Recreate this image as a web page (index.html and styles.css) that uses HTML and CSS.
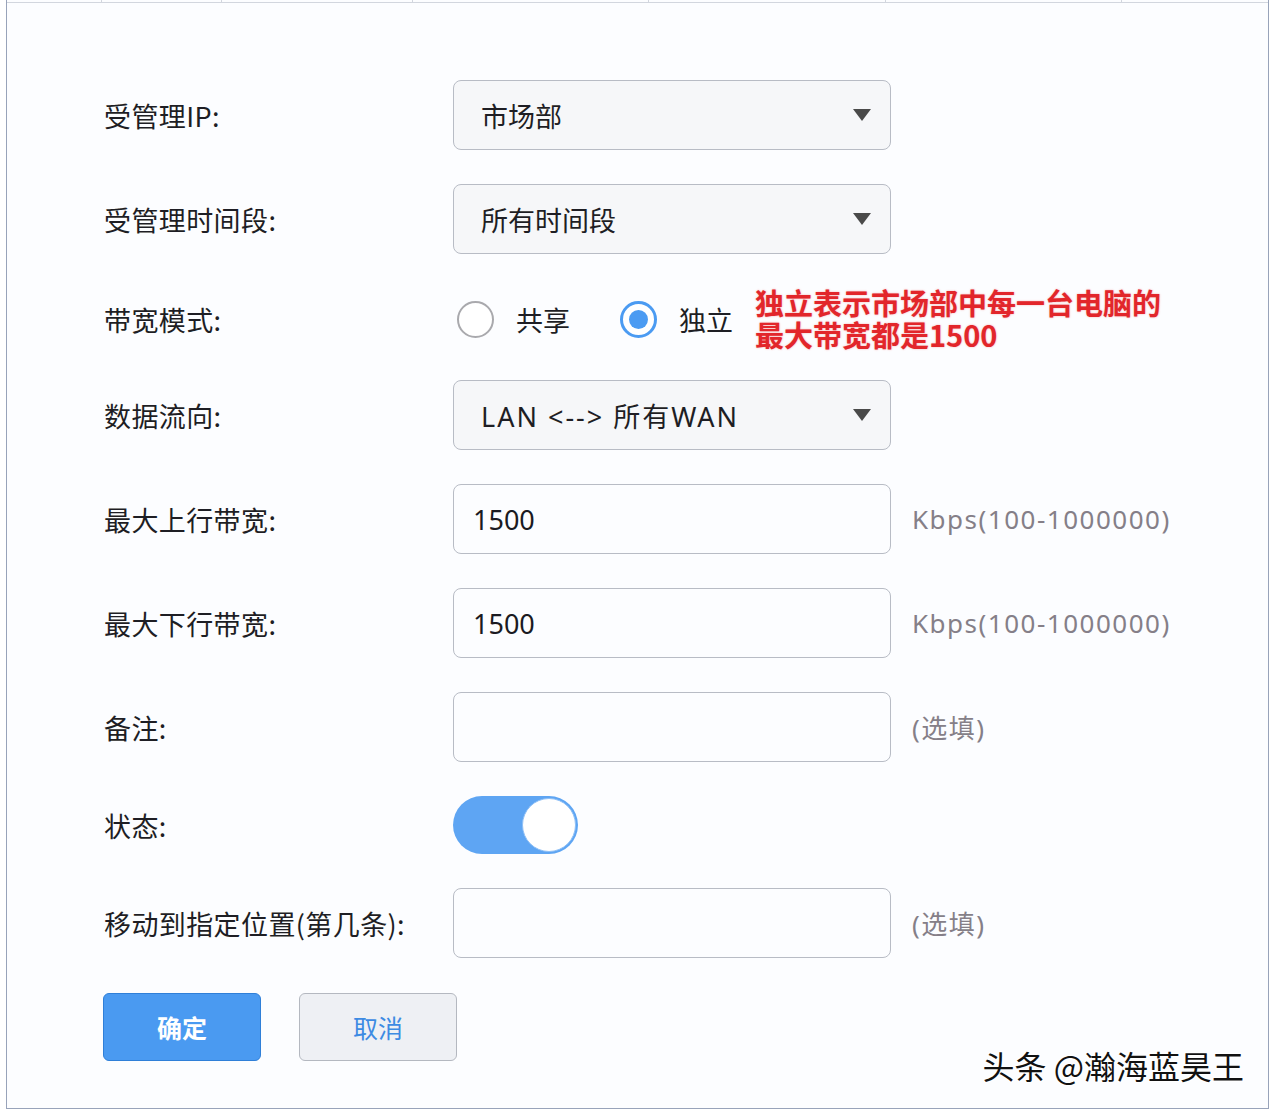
FILE: index.html
```html
<!DOCTYPE html>
<html lang="zh-CN">
<head>
<meta charset="utf-8">
<title>带宽控制</title>
<link rel="stylesheet" href="styles.css">
</head>
<body>
<div class="frame">
  <div class="thead">
    <span class="th c1"></span><span class="th c2"></span><span class="th c3"></span><span class="th c4"></span><span class="th c5"></span><span class="th c6"></span><span class="th c7"></span>
  </div>
  <form class="form">
    <div class="row">
      <label class="lbl">受管理IP:</label>
      <div class="select"><span class="val">市场部</span><svg class="caret" width="18" height="12" viewBox="0 0 18 12"><path d="M0 0H18L9 12Z" fill="#4a4a4a"/></svg></div>
    </div>
    <div class="row">
      <label class="lbl">受管理时间段:</label>
      <div class="select"><span class="val">所有时间段</span><svg class="caret" width="18" height="12" viewBox="0 0 18 12"><path d="M0 0H18L9 12Z" fill="#4a4a4a"/></svg></div>
    </div>
    <div class="row short">
      <label class="lbl">带宽模式:</label>
      <div class="radios">
        <span class="radio"></span><span class="rtext">共享</span>
        <span class="radio on"><span class="dot"></span></span><span class="rtext">独立</span>
        <div class="note"><div class="nline">独立表示市场部中每一台电脑的</div><div class="nline">最大带宽都是1500</div></div>
      </div>
    </div>
    <div class="row">
      <label class="lbl">数据流向:</label>
      <div class="select"><span class="val wide">LAN &lt;--&gt; 所有WAN</span><svg class="caret" width="18" height="12" viewBox="0 0 18 12"><path d="M0 0H18L9 12Z" fill="#4a4a4a"/></svg></div>
    </div>
    <div class="row">
      <label class="lbl">最大上行带宽:</label>
      <div class="input"><span class="ival">1500</span></div>
      <span class="hint">Kbps(100-1000000)</span>
    </div>
    <div class="row">
      <label class="lbl">最大下行带宽:</label>
      <div class="input"><span class="ival">1500</span></div>
      <span class="hint">Kbps(100-1000000)</span>
    </div>
    <div class="row">
      <label class="lbl">备注:</label>
      <div class="input"></div>
      <span class="hint">(选填)</span>
    </div>
    <div class="row short">
      <label class="lbl">状态:</label>
      <div class="switch"><span class="knob"></span></div>
    </div>
    <div class="row">
      <label class="lbl">移动到指定位置(第几条):</label>
      <div class="input"></div>
      <span class="hint">(选填)</span>
    </div>
    <div class="buttons">
      <button type="button" class="btn primary">确定</button>
      <button type="button" class="btn ghost">取消</button>
    </div>
  </form>
  <div class="watermark">头条 @瀚海蓝昊王</div>
</div>
</body>
</html>
```
FILE: styles.css
```css
* { box-sizing: border-box; }
html, body { margin: 0; padding: 0; background: #ffffff; }
body {
  font-family: "Noto Sans", "Noto Sans CJK SC", sans-serif;
  color: #222;
}
.frame {
  position: relative;
  margin-left: 6px;
  width: 1263px;
  height: 1109px;
  border: 1px solid #98a3ba;
  border-top: none;
  background: #fcfdff;
}
.thead {
  display: flex;
  height: 3px;
  border-bottom: 1px solid #d2d6de;
}
.th { height: 100%; border-right: 1px solid #d2d6de; }
.c1 { width: 95px; }
.c2 { width: 120px; }
.c3 { width: 191px; }
.c4 { width: 236px; }
.c5 { width: 237px; }
.c6 { width: 236px; }
.c7 { flex: 1; border-right: none; }

.form {
  display: flex;
  flex-direction: column;
  gap: 34px;
  padding: 77px 0 0 97px;
}
.row {
  display: grid;
  grid-template-columns: 349px 438px auto;
  align-items: center;
  height: 70px;
}
.row.short { height: 58px; }
.lbl {
  font-family: "Noto Sans CJK SC", sans-serif;
  font-size: 27px;
  color: #1e1e24;
  letter-spacing: 0.4px;
}
.select {
  height: 70px;
  border: 1px solid #b8bcc5;
  border-radius: 8px;
  background: #f6f7f9;
  display: flex;
  align-items: center;
  justify-content: space-between;
  padding: 0 19px 0 27px;
}
.val {
  font-family: "Noto Sans", "Noto Sans CJK SC", sans-serif;
  font-size: 27px;
  color: #1e1e24;
}
.val.wide { letter-spacing: 2px; }
.caret { display: block; }
.input {
  height: 70px;
  border: 1px solid #b8bcc5;
  border-radius: 8px;
  background: #fcfdff;
  display: flex;
  align-items: center;
  padding: 0 19px;
}
.ival {
  font-family: "Noto Sans", sans-serif;
  font-size: 27px;
  color: #1a1a22;
}
.hint {
  margin-left: 21px;
  font-family: "Noto Sans", "Noto Sans CJK SC", sans-serif;
  font-size: 26px;
  letter-spacing: 1.5px;
  color: #857f88;
}
.radios {
  grid-column: 2 / 4;
  display: flex;
  align-items: center;
  padding-left: 4px;
}
.radio {
  width: 37px;
  height: 37px;
  border-radius: 50%;
  border: 2px solid #a9a9ad;
  background: #fff;
  display: flex;
  align-items: center;
  justify-content: center;
  flex: none;
}
.radio.on {
  border: 3px solid #4b9bf2;
  margin-left: 50px;
}
.dot {
  width: 19px;
  height: 19px;
  border-radius: 50%;
  background: #4b9bf2;
}
.rtext {
  margin-left: 22px;
  font-family: "Noto Sans CJK SC", sans-serif;
  font-size: 27px;
  color: #1e1e24;
}
.note {
  margin-left: 22px;
  margin-top: -2px;
  display: flex;
  flex-direction: column;
  font-family: "Noto Sans CJK SC", sans-serif;
  font-weight: 700;
  font-size: 29px;
  color: #e2262b;
  text-shadow: 0 0 2px rgba(240, 60, 60, 0.45);
  white-space: nowrap;
}
.nline { line-height: 32px; height: 32px; }
.switch {
  width: 125px;
  height: 58px;
  border-radius: 29px;
  background: #5ea5f3;
  display: flex;
  align-items: center;
  justify-content: flex-end;
  padding-right: 2px;
}
.knob {
  width: 54px;
  height: 54px;
  border-radius: 50%;
  background: #fff;
  border: 1px solid #8fc0f6;
}
.buttons {
  display: flex;
  gap: 38px;
  margin-top: 1px;
  margin-left: -1px;
}
.btn {
  width: 158px;
  height: 68px;
  border-radius: 6px;
  font-family: "Noto Sans CJK SC", sans-serif;
  font-size: 25px;
  cursor: pointer;
}
.btn.primary {
  background: #4a9af1;
  border: 1px solid #2f7fd8;
  color: #ffffff;
  font-weight: 700;
}
.btn.ghost {
  background: #eef0f4;
  border: 1px solid #b4b8c0;
  color: #3d8be3;
}
.watermark {
  position: absolute;
  right: 24px;
  bottom: 23px;
  font-family: "Noto Sans CJK SC", sans-serif;
  font-size: 32px;
  line-height: 40px;
  color: #111;
  text-shadow: 1px 1px 0 #fff, -1px -1px 0 #fff, 1px -1px 0 #fff, -1px 1px 0 #fff, 0 0 3px #fff;
}
```
